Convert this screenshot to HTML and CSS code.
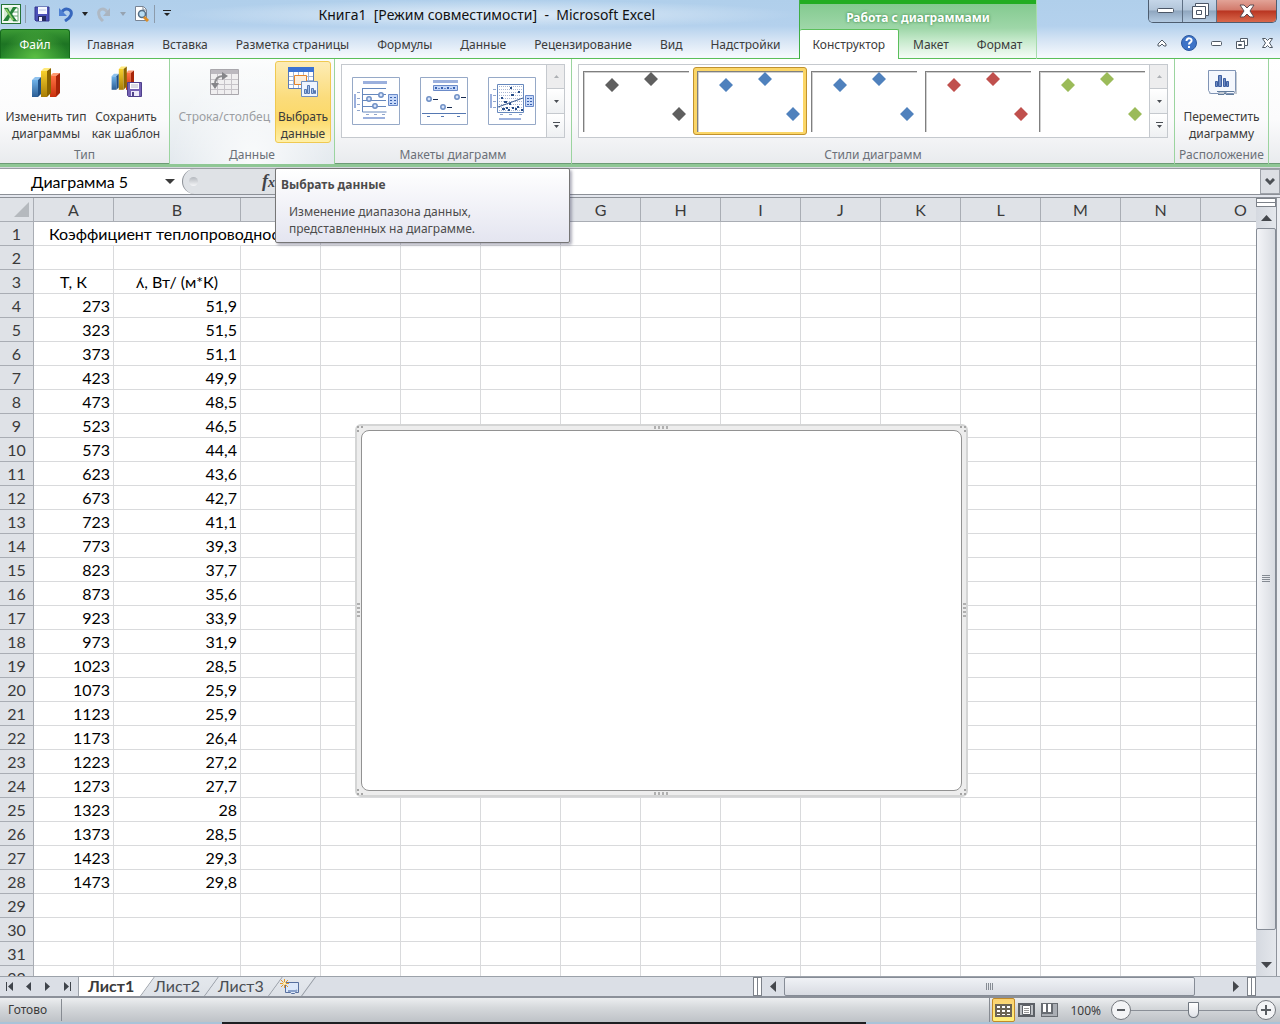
FILE: index.html
```
<!DOCTYPE html>
<html lang="ru">
<head>
    <meta charset="UTF-8">
    <meta name="viewport" content="width=device-width, initial-scale=1.0">
    <title>Книга1 - Microsoft Excel</title>
    <link rel="stylesheet" href="styles.css">
</head>
<body>
<div class="app">

    <header class="header">
        <div class="header-left">
            <div class="titlebar">
                <div class="quick-access">
                    <svg class="app-logo" width="20" height="20" viewBox="0 0 20 20"><rect x=".5" y=".5" width="19" height="19" fill="#f4faf4" stroke="#257339"/><path d="M3 3h11v14H3z" fill="#d7ecd5"/><path d="M12 4h5v13h-5M12 8h5M12 12h5" fill="#fff" stroke="#6da877"/><path d="M3 4h4l2 4 3-5h4l-5 7 5 7h-4l-3-4-2 4H2l5-7z" fill="#268239"/><path d="M4 5h2l7 11h-2z" fill="#91ce69"/></svg>
                    <span class="separator"></span>
                    <button class="icon-btn save" aria-label="Сохранить"><svg width="16" height="16" viewBox="0 0 16 16"><path d="M1 1h14v14H2l-1-1z" fill="#4b50b8" stroke="#32368d"/><path d="M4 1h9v7H4z" fill="#f6f8ff"/><path d="M5 4h7" stroke="#b9c4e2"/><path d="M4 10h8v5H4z" fill="#252b60"/><path d="M5 11h3v4H5z" fill="#eef"/></svg></button>
                    <button class="icon-btn" aria-label="Отменить"><svg width="16" height="16" viewBox="0 0 16 16"><path d="M4 6c3-5 11-3 9 3-1 3-3 4-6 6" fill="none" stroke="#3767bd" stroke-width="3"/><path d="M1 2v8h8z" fill="#4e80d2"/></svg></button>
                    <svg class="caret" width="6" height="4" viewBox="0 0 6 4"><path d="M0 0h6L3 4z"/></svg>
                    <button class="icon-btn" aria-label="Вернуть"><svg width="16" height="16" viewBox="0 0 16 16"><path d="M11 6C8 1 1 3 3 9c0 3 2 4 4 6" fill="none" stroke="#afb9c4" stroke-width="3"/><path d="M14 2v8H7z" fill="#aab4bf"/></svg></button>
                    <svg class="caret muted" width="6" height="4" viewBox="0 0 6 4"><path d="M0 0h6L3 4z"/></svg>
                    <button class="icon-btn preview" aria-label="Просмотр"><svg width="16" height="16" viewBox="0 0 16 16"><path d="M1.500.5h8l3 3v11h-11z" fill="#fff" stroke="#788494"/><path d="M9 1v3h3" fill="none" stroke="#788494"/><circle cx="8" cy="8" r="3.500" fill="#b7dcf2" stroke="#536d85" stroke-width="1.500"/><path d="M10 11l4 4" stroke="#dc8d28" stroke-width="3"/></svg></button>
                    <span class="separator"></span>
                    <svg class="caret" width="8" height="8" viewBox="0 0 8 8"><path d="M0 0h8v1H0zM1 3h6L4 6z"/></svg>
                </div>
                <div class="window-title">Книга1&nbsp; [Режим совместимости]&nbsp; -&nbsp; Microsoft Excel</div>
            </div>
            <nav class="tabs main-tabs">
                <button class="file-tab">Файл</button>
                <button class="tab">Главная</button>
                <button class="tab">Вставка</button>
                <button class="tab">Разметка страницы</button>
                <button class="tab">Формулы</button>
                <button class="tab">Данные</button>
                <button class="tab">Рецензирование</button>
                <button class="tab">Вид</button>
                <button class="tab">Надстройки</button>
            </nav>
        </div>
        <div class="context-tabs">
            <div class="context-title">Работа с диаграммами</div>
            <nav class="tabs">
                <button class="tab active">Конструктор</button>
                <button class="tab">Макет</button>
                <button class="tab">Формат</button>
            </nav>
        </div>
        <div class="header-right">
            <div class="window-buttons">
                <button aria-label="Свернуть"><svg width="18" height="6" viewBox="0 0 18 6"><rect x=".5" y=".5" width="16" height="4" rx="1" fill="#fff" stroke="#4b5666"/></svg></button>
                <button aria-label="Развернуть"><svg width="18" height="17" viewBox="0 0 18 17"><path d="M4.500.5h13v12h-3v3h-13v-12h3z" fill="#fff" stroke="#4b5666"/><path d="M4.500 3.500h10v9M5.500 7.500h5v4h-5z" fill="none" stroke="#4b5666"/></svg></button>
                <button class="close" aria-label="Закрыть"><svg width="16" height="14" viewBox="0 0 16 14"><path d="M1 1h4l3 3 3-3h4l-4 6 4 6h-4l-3-3-3 3H1l4-6z" fill="#fff" stroke="#5a4a50"/></svg></button>
            </div>
            <div class="book-buttons">
                <button class="icon-btn" aria-label="Свернуть ленту"><svg width="10" height="8" viewBox="0 0 10 8"><path d="M1 5l4-4 4 4v2H7L5 5 3 7H1z" fill="#fff" stroke="#505a66"/></svg></button>
                <button class="icon-btn" aria-label="Справка"><svg width="16" height="16" viewBox="0 0 16 16"><circle cx="8" cy="8" r="7.500" fill="#3d73c7" stroke="#2c589f"/><path d="M5.500 6c0-4 6-3 5 0-.5 1.500-2.500 1.500-2.500 3.500" fill="none" stroke="#fff" stroke-width="2"/><path d="M7 11h2v2H7z" fill="#fff"/></svg></button>
                <button class="icon-btn" aria-label="Свернуть книгу"><svg width="11" height="5" viewBox="0 0 11 5"><rect x=".5" y=".5" width="10" height="4" rx="1" fill="#fff" stroke="#505a66"/></svg></button>
                <button class="icon-btn" aria-label="Восстановить книгу"><svg width="12" height="11" viewBox="0 0 12 11"><path d="M4.500.5h7v7h-3v3h-8v-7h4z" fill="#fff" stroke="#505a66"/><path d="M4.500 3.500h4v4M2.500 6.500h3v1h-3zM7 3h2" fill="none" stroke="#505a66"/></svg></button>
                <button class="icon-btn" aria-label="Закрыть книгу"><svg width="11" height="10" viewBox="0 0 11 10"><path d="M.5.5h3l2 2 2-2h3L7.500 5l3 4.500h-3l-2-2-2 2h-3l3-4.500z" fill="#fff" stroke="#505a66"/></svg></button>
            </div>
        </div>
    </header>

    <section class="ribbon">
        <div class="group group-type">
            <div class="group-body">
                <button class="big-btn"><svg width="32" height="32" viewBox="0 0 32 32"><use href="#bars"/></svg><span>Изменить&nbsp;тип диаграммы</span></button>
                <button class="big-btn"><svg width="32" height="32" viewBox="0 0 32 32"><use href="#bars" transform="translate(0 -1) scale(.8)"/><path d="M17.500 16.500h14v14h-13l-1-1z" fill="#7562b4" stroke="#4f408c"/><path d="M20 17h9v6h-9z" fill="#fff"/><path d="M21 19h7M21 21h7" stroke="#b4b6c9"/><path d="M21 25h8v5h-8z" fill="#ede9fa"/><path d="M22 26h2v4h-2z" fill="#51448b"/></svg><span>Сохранить как&nbsp;шаблон</span></button>
            </div>
            <div class="group-name">Тип</div>
        </div>
        <div class="group group-data">
            <div class="group-body">
                <button class="big-btn" disabled><svg width="32" height="32" viewBox="0 0 32 32"><path d="M2.500 3.500h28v25h-28z" fill="#f0eff0" stroke="#a9a7ac"/><path d="M3 4h27v4H3z" fill="#bcb9bf"/><path d="M3 13.500h27M3 18.500h27M3 23.500h27M9.500 8v20M16.500 8v20M23.500 8v20" stroke="#c6c3c8"/><path d="M7 19c0-6 3-9 8-9" fill="none" stroke="#8d8d90" stroke-width="2"/><path d="M3 17h8l-4 6zM14 6l6 4-6 4z" fill="#858589"/></svg><span>Строка/столбец</span></button>
                <button class="big-btn selected"><svg width="32" height="32" viewBox="0 0 32 32"><path d="M1.500 1.500h25v21h-25z" fill="#fff" stroke="#5a7ab7"/><path d="M1 1h26v5H1z" fill="#3b72d2"/><path d="M2 10.500h24M2 14.500h24M2 18.500h24M6.500 6v16M11.500 6v16M16.500 6v16M21.500 6v16" stroke="#9fb5d7"/><path d="M7.500 9.500h12v9h-12z" fill="#fdeed9" stroke="#e78428" stroke-width="1"/><path d="M14.500 15.500h16v15h-16z" fill="#eff5ff" stroke="#7090c0"/><path d="M17.500 23.500h2v4h-2zM20.500 19.500h2v8h-2zM24.500 22.500h2v5h-2zM27.500 24.500h1v3h-1z" fill="#a3c0e9" stroke="#5578b2"/></svg><span>Выбрать данные</span></button>
            </div>
            <div class="group-name">Данные</div>
        </div>
        <div class="group group-layouts">
            <div class="group-body">
                <div class="gallery">
                    <div class="gallery-items layouts">
                        <button aria-label="Макет 1"><svg width="48" height="48" viewBox="0 0 48 48"><path d="M.5.5h47v47H.5z" fill="#fff" stroke="#96a9c7"/><path d="M11 4h24v3H11zM2 17h2v14H2zM11 40h22v2H11z" fill="#9bb0dd"/><path d="M10.500 11v24h24M11 11.500h23M11 17.500h23M11 23.500h23M11 29.500h23" fill="none" stroke="#6688bd"/><path d="M5 15.500h3M5 21.500h3M5 27.500h3M5 33.500h3M14 37.500h3M22 37.500h3M30 37.500h3" stroke="#91a6cc"/><g fill="#d8e4fa" stroke="#6e8fc5" stroke-width="1.500"><circle cx="17" cy="22" r="2.200"/><circle cx="29" cy="18" r="2.200"/><circle cx="23" cy="29" r="2.200"/></g><path d="M36.500 17.500h9v11h-9z" fill="#c5d7f8" stroke="#6b8bc9"/><path d="M38 20.500h2M38 23.500h2M38 26.500h2M42 20.500h2M42 23.500h2M42 26.500h2" stroke="#365fae"/></svg></button>
                        <button aria-label="Макет 2"><svg width="48" height="48" viewBox="0 0 48 48"><path d="M.5.5h47v47H.5z" fill="#fff" stroke="#96a9c7"/><path d="M13 3h25v3H13z" fill="#9bb0dd"/><path d="M13.500 8.500h24v5h-24z" fill="#c5d7f8" stroke="#6b8bc9"/><path d="M15 11h2M21 11h2M27 11h2M33 11h2" stroke="#365fae" stroke-width="2"/><path d="M18 11.500h2M24 11.500h2M30 11.500h2" stroke="#6b8bc9"/><g fill="#d8e4fa" stroke="#6e8fc5" stroke-width="1.500"><circle cx="9" cy="22" r="2.200"/><circle cx="37" cy="20" r="2.200"/><circle cx="23" cy="30" r="2.200"/></g><path d="M13 22.500h5M41 20.500h5M27 30.500h5" stroke="#172b50"/><path d="M2 36.500h44M7 39.500h3M21 39.500h3M37 39.500h3" stroke="#5578b2"/></svg></button>
                        <button aria-label="Макет 3"><svg width="48" height="48" viewBox="0 0 48 48"><path d="M.5.5h47v47H.5z" fill="#fff" stroke="#96a9c7"/><path d="M2 17h2v14H2zM11 41h22v2H11z" fill="#9bb0dd"/><path d="M9.500 7.500h26v28h-26z" fill="#fff" stroke="#6688bd"/><path d="M11 9.500h24M11 12.500h24M11 15.500h24M11 18.500h24M11 21.500h24M11 24.500h24M11 27.500h24M11 30.500h24M11 33.500h24" stroke="#aab8d4" stroke-dasharray="1 1"/><path d="M10 30l25-9" stroke="#38598e"/><path d="M22 11h2M30 15h2M23 18h3M13 21h2M16 25h3M21 27h2M14 32h3M18 31h2M20 33h2M24 31h2M27 32h2M29 30h2M33 33h2" stroke="#284d87" stroke-width="2"/><path d="M5 12.500h3M5 18.500h3M5 24.500h3M5 30.500h3M12 37.500h3M21 37.500h3M31 37.500h3" stroke="#91a6cc"/><path d="M37.500 18.500h8v11h-8z" fill="#c5d7f8" stroke="#6b8bc9"/><path d="M39 21.500h2M39 24.500h2M39 27.500h2M42 21.500h2M42 24.500h2M42 27.500h2" stroke="#365fae"/></svg></button>
                    </div>
                    <div class="gallery-scroll">
                        <button aria-label="Вверх" disabled><svg width="8" height="8" viewBox="0 0 8 8"><path d="M2 5h5L4.500 2z"/></svg></button>
                        <button aria-label="Вниз"><svg width="8" height="8" viewBox="0 0 8 8"><path d="M2 3h5L4.500 6z"/></svg></button>
                        <button aria-label="Ещё"><svg width="8" height="8" viewBox="0 0 8 8"><path d="M1 1h7v1H1zM2 4h5L4.500 7z"/></svg></button>
                    </div>
                </div>
            </div>
            <div class="group-name">Макеты диаграмм</div>
        </div>
        <div class="group group-styles">
            <div class="group-body">
                <div class="gallery">
                    <div class="gallery-items chart-styles">
                        <button class="style-gray" aria-label="Стиль 1"><svg width="106" height="61" viewBox="0 0 106 61"><use href="#points"/></svg></button>
                        <button class="style-blue current" aria-label="Стиль 2"><svg width="106" height="61" viewBox="0 0 106 61"><use href="#points"/></svg></button>
                        <button class="style-blue" aria-label="Стиль 3"><svg width="106" height="61" viewBox="0 0 106 61"><use href="#points"/></svg></button>
                        <button class="style-red" aria-label="Стиль 4"><svg width="106" height="61" viewBox="0 0 106 61"><use href="#points"/></svg></button>
                        <button class="style-green" aria-label="Стиль 5"><svg width="106" height="61" viewBox="0 0 106 61"><use href="#points"/></svg></button>
                    </div>
                    <div class="gallery-scroll">
                        <button aria-label="Вверх" disabled><svg width="8" height="8" viewBox="0 0 8 8"><path d="M2 5h5L4.500 2z"/></svg></button>
                        <button aria-label="Вниз"><svg width="8" height="8" viewBox="0 0 8 8"><path d="M2 3h5L4.500 6z"/></svg></button>
                        <button aria-label="Ещё"><svg width="8" height="8" viewBox="0 0 8 8"><path d="M1 1h7v1H1zM2 4h5L4.500 7z"/></svg></button>
                    </div>
                </div>
            </div>
            <div class="group-name">Стили диаграмм</div>
        </div>
        <div class="group group-place">
            <div class="group-body">
                <button class="big-btn"><svg width="32" height="32" viewBox="0 0 32 32"><path d="M3 27h27V6" fill="none" stroke="#c4cad2" stroke-width="2"/><path d="M2.500 4.500h27v20l-1 2-1 1h-7l-1-2h-6l-1 2h-8l-2-3z" fill="#f4f7fd" stroke="#8094b5"/><path d="M11 25.500h17M12 28.500h6l1-2 1 2h8" fill="none" stroke="#617b9b"/><path d="M9.500 15.500h2v5h-2zM12.500 9.500h3v11h-3zM17.500 12.500h2v8h-2zM20.500 15.500h2v5h-2z" fill="#718dc2" stroke="#3d5fa2"/></svg><span>Переместить диаграмму</span></button>
            </div>
            <div class="group-name">Расположение</div>
        </div>
    </section>

    <div class="formula-bar">
        <div class="name-box">
            <input type="text" value="Диаграмма 5" aria-label="Имя">
            <svg width="10" height="5" viewBox="0 0 10 5"><path d="M0 0h10L5 5z" fill="#3b3b3b"/></svg>
        </div>
        <div class="fx-area"><span class="fx-dot"></span><button class="fx" aria-label="Вставить функцию"><i>f</i><i class="fx-x">x</i></button></div>
        <input class="formula" type="text" aria-label="Строка формул">
        <button class="expand" aria-label="Развернуть строку формул"><svg width="10" height="7" viewBox="0 0 10 7"><path d="M1 1l4 4 4-4" fill="none" stroke="#4c5055" stroke-width="3"/></svg></button>

        <div class="tooltip" role="tooltip">
            <strong>Выбрать данные</strong>
            <p>Изменение диапазона данных, представленных на диаграмме.</p>
        </div>
    </div>

    <main class="workspace">
        <div class="sheet">
            <table class="cells">
                <colgroup id="cols"></colgroup>
                <thead><tr id="letters"><th class="corner"><svg width="15" height="15" viewBox="0 0 15 15"><path d="M15 0v15H0z" fill="#b5b9be"/></svg></th></tr></thead>
                <tbody id="rows"></tbody>
            </table>
            <div class="chart">
                <div class="chart-area"></div>
                <span class="grip top"></span>
                <span class="grip bottom"></span>
                <span class="grip side left"></span>
                <span class="grip side right"></span>
                <span class="corner-grip tl"></span>
                <span class="corner-grip tr"></span>
                <span class="corner-grip bl"></span>
                <span class="corner-grip br"></span>
            </div>
        </div>
        <div class="vscroll">
            <span class="split-h"></span>
            <button class="arrow" aria-label="Прокрутить вверх"><svg width="11" height="6" viewBox="0 0 11 6"><path d="M0 6h11L5.500 0z"/></svg></button>
            <span class="vthumb"><svg width="8" height="8" viewBox="0 0 8 8"><path d="M0 .5h8M0 2.500h8M0 4.500h8M0 6.500h8" stroke="#858b93"/></svg></span>
            <button class="arrow" aria-label="Прокрутить вниз"><svg width="11" height="6" viewBox="0 0 11 6"><path d="M0 0h11L5.500 6z"/></svg></button>
        </div>
    </main>

    <div class="sheet-bar">
        <div class="sheet-nav">
            <button aria-label="Первый лист"><svg width="8" height="9" viewBox="0 0 8 9"><path d="M0 0h1v9H0zM7 0v9L2 4.500z"/></svg></button>
            <button aria-label="Предыдущий лист"><svg width="8" height="9" viewBox="0 0 8 9"><path d="M6 0v9L1 4.500z"/></svg></button>
            <button aria-label="Следующий лист"><svg width="8" height="9" viewBox="0 0 8 9"><path d="M1 0v9l5-4.500z"/></svg></button>
            <button aria-label="Последний лист"><svg width="8" height="9" viewBox="0 0 8 9"><path d="M7 0h1v9H7zM1 0v9l5-4.500z"/></svg></button>
        </div>
        <div class="sheet-tabs">
            <button class="sheet-tab active">Лист1</button>
            <button class="sheet-tab">Лист2</button>
            <button class="sheet-tab">Лист3</button>
            <button class="sheet-tab new" aria-label="Вставить лист"><svg width="20" height="16" viewBox="0 0 20 16"><path d="M5.500 3.500h13v10h-3l-1 1h-3l-1-1h-5z" fill="#dce8fa" stroke="#566f9e"/><path d="M8 12h8l1-1" fill="none" stroke="#8aa2cb" stroke-width="2"/><path d="M4.500 0v9M0 4.500h9M1 1l7 7M8 1L1 8" stroke="#e59a2c"/><circle cx="4.500" cy="4.500" r="1.500" fill="#fff3b8"/></svg></button>
        </div>
        <div class="hscroll">
            <span class="split-v"></span>
            <button class="arrow" aria-label="Прокрутить влево"><svg width="6" height="11" viewBox="0 0 6 11"><path d="M6 0v11L0 5.500z"/></svg></button>
            <span class="hthumb"><svg width="8" height="7" viewBox="0 0 8 7"><path d="M.5 0v7M2.500 0v7M4.500 0v7M6.500 0v7" stroke="#858b93"/></svg></span>
            <button class="arrow" aria-label="Прокрутить вправо"><svg width="6" height="11" viewBox="0 0 6 11"><path d="M0 0v11l6-5.500z"/></svg></button>
            <span class="split-v"></span>
        </div>
    </div>

    <footer class="status">
        <span class="ready">Готово</span>
        <div class="views">
            <button class="current" aria-label="Обычный"><svg width="17" height="13" viewBox="0 0 17 13"><path d="M0 0h17v13H0z" fill="#6b6455"/><path d="M2 2h3v2H2zM7 2h3v2H7zM12 2h3v2h-3zM2 6h3v2H2zM7 6h3v2H7zM12 6h3v2h-3zM2 10h3v1H2zM7 10h3v1H7zM12 10h3v1h-3z" fill="#fff"/></svg></button>
            <button aria-label="Разметка страницы"><svg width="17" height="14" viewBox="0 0 17 14"><path d="M1 1h15v12H1z" fill="#bdc0c4" stroke="#5c6066" stroke-width="2"/><path d="M4.500 2.500h8v9h-8z" fill="#fff" stroke="#5c6066"/><path d="M6 5.500h5M6 7.500h5M6 9.500h5" stroke="#999"/></svg></button>
            <button aria-label="Страничный режим"><svg width="17" height="14" viewBox="0 0 17 14"><path d="M0 0h17v14H0z" fill="#686c72"/><path d="M2 1h3v8H2zM7 1h3v8H7z" fill="#fff"/><path d="M12 1h4v12h-4zM1 11h11v2H1z" fill="#aaaeb4"/></svg></button>
        </div>
        <span class="percent">100%</span>
        <div class="zoom">
            <button aria-label="Уменьшить"><svg width="20" height="20" viewBox="0 0 20 20"><circle cx="10" cy="10" r="9.500" fill="#f3f4f6" stroke="#73777d"/><path d="M6 10h8" stroke="#595d62" stroke-width="2"/></svg></button>
            <input type="range" min="0" max="200" value="100" aria-label="Масштаб">
            <button aria-label="Увеличить"><svg width="20" height="20" viewBox="0 0 20 20"><circle cx="10" cy="10" r="9.500" fill="#f3f4f6" stroke="#73777d"/><path d="M5 10h10M10 5v10" stroke="#595d62" stroke-width="2"/></svg></button>
        </div>
    </footer>
    <div class="taskbar-edge"></div>
</div>

<svg width="0" height="0" class="defs">
    <defs>
        <linearGradient id="gBlue" x2="0" y2="1"><stop offset="0" stop-color="#6fb3ea"/><stop offset="1" stop-color="#2b5d94"/></linearGradient>
        <linearGradient id="gYellow" x2="0" y2="1"><stop offset="0" stop-color="#f7d02c"/><stop offset="1" stop-color="#a87d06"/></linearGradient>
        <linearGradient id="gRed" x2="0" y2="1"><stop offset="0" stop-color="#ff7243"/><stop offset="1" stop-color="#c9300c"/></linearGradient>
        <g id="bars">
            <path d="M2 14h6v17H2z" fill="url(#gBlue)"/><path d="M2 14l3-3h6l-3 3z" fill="#8fc2ee"/><path d="M8 14l3-3v17l-3 3z" fill="#1e4f86"/>
            <path d="M20 10h6v21h-6z" fill="url(#gRed)"/><path d="M20 10l3-3h7l-4 3z" fill="#ff9a70"/><path d="M26 10l4-3v20l-4 4z" fill="#a82508"/>
            <path d="M11 5h6v26h-6z" fill="url(#gYellow)"/><path d="M11 5l3-3h7l-4 3z" fill="#ffe97a"/><path d="M17 5l4-3v25l-4 4z" fill="#8a6500"/>
        </g>
        <g id="points">
            <path d="M0 0h106v1H1v60H0z" fill="#7f7f7f"/><path d="M1 1h105v1H2v59H1z" fill="#d0d0d0"/>
            <path d="M29 7l7 7-7 7-7-7zM68 1l7 7-7 7-7-7zM96 36l7 7-7 7-7-7z" fill="currentColor"/>
        </g>
    </defs>
</svg>

<script>
    const letters = "ABCDEFGHIJKLMNO".split("");
    const temps = [];
    for (let t = 273; t <= 1473; t += 50) temps.push(t);
    const lambda = ["51,9", "51,5", "51,1", "49,9", "48,5", "46,5", "44,4", "43,6", "42,7", "41,1", "39,3", "37,7", "35,6",
        "33,9", "31,9", "28,5", "25,9", "25,9", "26,4", "27,2", "27,7", "28", "28,5", "29,3", "29,8"];

    const cols = document.getElementById('cols');
    cols.innerHTML = '<col class="col-num"><col class="col"><col class="col-wide">' + '<col class="col">'.repeat(letters.length - 2);
    letters.forEach(l => {
        document.getElementById('letters').insertAdjacentHTML('beforeend', `<th>${l}</th>`);
    });

    let html = '';
    for (let r = 1; r <= 32; r++) {
        html += `<tr><th>${r}</th>`;
        if (r === 1) {
            // заголовок объединён на A1:C1
            html += '<td class="title" colspan="3">Коэффициент теплопроводности</td>' + '<td></td>'.repeat(letters.length - 3);
        } else if (r === 3) {
            html += '<td class="center">T, К</td><td class="center">ʎ, Вт/ (м*К)</td>' + '<td></td>'.repeat(letters.length - 2);
        } else if (r >= 4 && r <= 28) {
            html += `<td>${temps[r - 4]}</td><td>${lambda[r - 4]}</td>` + '<td></td>'.repeat(letters.length - 2);
        } else {
            html += '<td></td>'.repeat(letters.length);
        }
        html += '</tr>';
    }
    document.getElementById('rows').innerHTML = html;
</script>
</body>
</html>
```

FILE: styles.css
```
* {
    box-sizing: border-box;
}
body {
    margin: 0;
    font-family: "Noto Sans", "Open Sans", sans-serif;
    font-size: 12px;
    color: #3b3b3b;
}
button, input {
    font: inherit;
    color: inherit;
    border: 0;
    margin: 0;
    padding: 0;
    background: none;
}
svg {
    display: block;
    flex: none;
}
.defs {
    position: absolute;
}
.app {
    display: flex;
    flex-direction: column;
    height: 100vh;
    overflow: hidden;
}

/* title and tabs */
.header {
    display: flex;
    height: 59px;
    background: linear-gradient(#b0cfeb, #b4d1ed 26px, #d5e4f4 40px, #f4f8fd 56px);
}
.header-left, .context-tabs {
    display: flex;
    flex-direction: column;
}
.titlebar {
    display: flex;
    height: 29px;
}
.quick-access {
    display: flex;
    align-items: center;
    gap: 8px;
    padding: 0 4px 2px 1px;
}
.separator {
    width: 1px;
    height: 18px;
    background: #8c9bab;
    margin-left: -4px;
}
.icon-btn {
    display: flex;
    align-items: center;
    justify-content: center;
}
.caret {
    fill: #222;
}
.caret.muted {
    fill: #96a3b1;
}
.window-title {
    flex: 1;
    text-align: center;
    font-size: 14px;
    line-height: 29px;
    color: #111;
    white-space: nowrap;
    background: radial-gradient(closest-side, rgba(255, 255, 255, 0.6), rgba(255, 255, 255, 0));
}
.tabs {
    display: flex;
    height: 30px;
    border-bottom: 1px solid #5bbf5b;
}
.main-tabs {
    padding-right: 4px;
}
.tab {
    padding: 2px 14px 0;
    white-space: nowrap;
}
.file-tab {
    width: 70px;
    margin-right: 3px;
    color: #fff;
    border: 1px solid #156a1c;
    border-bottom: 0;
    border-radius: 3px 3px 0 0;
    background: radial-gradient(ellipse at bottom, #5cbf44, rgba(60, 150, 50, 0) 70%), linear-gradient(#3b9a35, #1d7423 50%, #26862b);
}
.context-tabs {
    background: linear-gradient(#22ad22 4px, #84ca90 4px, #9ed6a8 28px, #c4e9ca 40px, #f3fbf5 57px);
    border-left: 1px solid #3fae44;
    border-right: 1px solid #a7dbab;
}
.context-title {
    height: 29px;
    padding-top: 5px;
    line-height: 26px;
    text-align: center;
    font-weight: bold;
    color: #fff;
    text-shadow: 0 0 3px #2f7d3a;
}
.tab.active {
    background: #fff;
    border: 1px solid #5bbf5b;
    border-bottom: 0;
    border-left: 0;
    border-radius: 2px 2px 0 0;
    margin-bottom: -1px;
    padding: 0 13px;
}
.header-right {
    flex: 1;
    display: flex;
    flex-direction: column;
    align-items: flex-end;
    border-bottom: 1px solid #5bbf5b;
}
.window-buttons {
    display: flex;
    height: 23px;
    margin-right: 3px;
    border: 1px solid #4d5d70;
    border-top: 0;
    border-radius: 0 0 5px 5px;
    overflow: hidden;
}
.window-buttons button {
    display: flex;
    align-items: center;
    justify-content: center;
    width: 34px;
    border-right: 1px solid #5d6f84;
    background: linear-gradient(#c5d6e8, #b2c5d9 45%, #8fa6bf 50%, #b4cbe2);
}
.window-buttons .close {
    width: 59px;
    border-right: 0;
    background: linear-gradient(#e2a397, #d27a6b 45%, #b93521 50%, #d9684b);
}
.book-buttons {
    display: flex;
    align-items: center;
    gap: 14px;
    padding: 5px 7px 0 0;
    height: 35px;
}

/* ribbon */
.ribbon {
    display: flex;
    height: 108px;
    padding-right: 11px;
    background: linear-gradient(#fff, #fbfbfc 60px, #e9ebee 104px);
    border-bottom: 3px solid #8fc795;
    box-shadow: inset 0 -1px #6d9b76;
}
.group {
    display: flex;
    flex-direction: column;
    border-right: 1px solid #9bd49f;
    flex: none;
}
.group-type {
    width: 170px;
}
.group-data {
    width: 165px;
    background: radial-gradient(ellipse at bottom, rgba(255, 255, 255, 0.8), rgba(255, 255, 255, 0) 70%), linear-gradient(#fcfdfd, #e3e9ee);
}
.group-layouts {
    width: 237px;
}
.group-styles {
    flex: 1;
}
.group-place {
    width: 94px;
}
.group-body {
    display: flex;
    justify-content: center;
    flex: 1;
    padding-top: 2px;
}
.group-name {
    height: 18px;
    line-height: 18px;
    text-align: center;
    color: #6b7078;
}
.big-btn {
    display: flex;
    flex-direction: column;
    align-items: center;
    justify-content: flex-start;
    gap: 10px;
    height: 82px;
    padding: 4px 0 0;
    border: 1px solid transparent;
    border-radius: 3px;
    line-height: 17px;
}
.group-type .group-body {
    justify-content: flex-start;
    padding-left: 4px;
}
.group-type .big-btn {
    width: 84px;
}
.group-type .big-btn + .big-btn {
    width: 76px;
}
.group-data .group-body {
    justify-content: flex-end;
    gap: 4px;
    padding-right: 3px;
}
.big-btn:disabled {
    color: #9b9ea2;
}
.big-btn.selected {
    width: 56px;
    border-color: #efc951;
    background: linear-gradient(#fdecb5, #fbdc7b 45%, #fcd968 70%, #fff0a8);
}
.gallery {
    display: flex;
    flex: 1;
    height: 74px;
    margin: 3px 6px 0;
    border: 1px solid #c5c9ce;
    background: #fff;
}
.gallery-items {
    display: flex;
    flex: 1;
    align-items: center;
}
.layouts {
    gap: 20px;
    padding-left: 10px;
}
.chart-styles {
    overflow: hidden;
}
.chart-styles button {
    width: 114px;
    height: 68px;
    padding: 0 4px;
    border-radius: 3px;
    flex: none;
}
.chart-styles .current {
    padding: 0;
    border: 1px solid #c0922f;
    background: #fbd667;
}
.chart-styles .current svg {
    margin: 0 auto;
    background: #fff;
}
.style-gray {
    color: #5f5f5f;
}
.style-blue {
    color: #4f81bd;
}
.style-red {
    color: #c0504d;
}
.style-green {
    color: #9bbb59;
}
.gallery-scroll {
    display: flex;
    flex-direction: column;
    width: 18px;
    border-left: 1px solid #c5c9ce;
}
.gallery-scroll button {
    display: flex;
    flex: 1;
    align-items: center;
    justify-content: center;
    border-bottom: 1px solid #c5c9ce;
    background: linear-gradient(#fff, #eef0f2);
    fill: #4a4e54;
}
.gallery-scroll button:last-child {
    border-bottom: 0;
}
.gallery-scroll button:disabled {
    background: #ededee;
    fill: #adb0b4;
}

/* formula bar */
.formula-bar {
    position: relative;
    display: flex;
    height: 31px;
    padding-top: 2px;
    background: linear-gradient(#d5d8dd 1px, #9a9da3 1px, #9a9da3 2px, #fff 2px, #fff 27px, #8c9097 27px, #8c9097 28px, #e4e7ee 28px);
    border-bottom: 1px solid #8c9097;
    font-family: Lato, "Noto Sans", sans-serif;
    font-size: 16px;
    color: #000;
}
.formula-bar > * {
    height: 25px;
}
.name-box {
    display: flex;
    align-items: center;
    width: 182px;
    padding-right: 7px;
}
.name-box input {
    flex: 1;
    min-width: 0;
    padding-right: 6px;
    text-align: center;
}
.fx-area {
    display: flex;
    align-items: center;
    justify-content: space-between;
    width: 100px;
    padding: 0 7px 0 6px;
    background: #dfe2e6;
    border-left: 1px solid #8c9097;
    border-radius: 13px 0 0 13px;
}
.fx-dot {
    width: 9px;
    height: 9px;
    border-radius: 50%;
    background: linear-gradient(#b4b8be, #f5f6f8);
}
.fx {
    font-family: "Liberation Serif", serif;
    font-size: 18px;
    font-weight: bold;
    color: #3f4349;
}
.fx-x {
    font-size: 14px;
}
.formula {
    flex: 1;
    min-width: 0;
}
.expand {
    display: flex;
    align-items: center;
    justify-content: center;
    width: 20px;
    background: #dcdfe4;
    border: 1px solid #9da1a8;
}
.tooltip {
    position: absolute;
    left: 275px;
    top: 1px;
    z-index: 2;
    width: 295px;
    height: 75px;
    padding: 7px 5px;
    border: 1px solid #767676;
    border-radius: 2px;
    background: linear-gradient(#fff, #e4e5f0);
    box-shadow: 2px 2px 3px rgba(60, 60, 90, 0.4);
    font: 12px/17px "Noto Sans", "Open Sans", sans-serif;
    color: #4c4c4c;
}
.tooltip p {
    margin: 10px 60px 0 8px;
}

/* worksheet */
.workspace {
    display: flex;
    flex: 1;
    min-height: 0;
}
.sheet {
    position: relative;
    flex: 1;
    min-width: 0;
    overflow: hidden;
    background: #fff;
}
.cells {
    table-layout: fixed;
    width: 1281px;
    border-collapse: separate;
    border-spacing: 0;
    font: 16px/22px Lato, "Noto Sans", sans-serif;
    color: #000;
}
.col-num {
    width: 34px;
}
.col {
    width: 80px;
}
.col-wide {
    width: 127px;
}
.cells th {
    height: 24px;
    padding: 0;
    font-weight: normal;
    color: #3b3b3b;
    background: #dfe2e7;
    border-right: 1px solid #a9adb4;
    border-bottom: 1px solid #a9adb4;
}
.cells .corner svg {
    margin-left: 14px;
}
.cells td {
    height: 24px;
    padding: 0 3px;
    text-align: right;
    border-right: 1px solid #d9dadc;
    border-bottom: 1px solid #d9dadc;
    white-space: nowrap;
}
.cells td.center {
    text-align: center;
}
.cells td.title {
    padding-left: 15px;
    text-align: left;
}
.chart {
    position: absolute;
    left: 355px;
    top: 226px;
    width: 613px;
    height: 373px;
    padding: 4px;
    border: 2px solid #d4d5d5;
    border-radius: 6px;
    background: #ededed;
}
.chart-area {
    height: 100%;
    border: 1px solid #929292;
    border-radius: 8px;
    background: #fff;
}
.grip {
    position: absolute;
    left: 50%;
    width: 15px;
    height: 3px;
    margin-left: -8px;
    background: repeating-linear-gradient(90deg, #b0b0b0 0 2px, transparent 2px 4px);
}
.grip.top {
    top: 0;
}
.grip.bottom {
    bottom: 0;
}
.grip.side {
    top: 50%;
    left: 0;
    width: 3px;
    height: 15px;
    margin: -8px 0 0;
    background: repeating-linear-gradient(#b0b0b0 0 2px, transparent 2px 4px);
}
.grip.right {
    left: auto;
    right: 0;
}
.corner-grip {
    position: absolute;
    width: 6px;
    height: 6px;
    border: 2px dotted #a5a5a5;
}
.tl {
    top: 0;
    left: 0;
    border-right: 0;
    border-bottom: 0;
}
.tr {
    top: 0;
    right: 0;
    border-left: 0;
    border-bottom: 0;
}
.bl {
    bottom: 0;
    left: 0;
    border-right: 0;
    border-top: 0;
}
.br {
    bottom: 0;
    right: 0;
    border-left: 0;
    border-top: 0;
}
.arrow {
    display: flex;
    align-items: center;
    justify-content: center;
    flex: none;
    fill: #44474c;
}
.vscroll {
    display: flex;
    flex-direction: column;
    width: 24px;
    padding-right: 4px;
    background: linear-gradient(90deg, #d5d9e0, #e4e7ec 20px, #8e939b 20px, #8e939b 21px, #eceef2 21px);
}
.vscroll .arrow {
    height: 21px;
}
.vscroll > :last-child {
    height: 22px;
    margin-top: 24px;
}
.split-h {
    height: 9px;
    border: 1px solid #7d828a;
    background: linear-gradient(#fff 3px, #7d828a 3px, #7d828a 4px, #fff 4px);
}
.vthumb, .hthumb {
    display: flex;
    flex: 1;
    align-items: center;
    justify-content: center;
    border: 1px solid #868c96;
    border-radius: 2px;
}
.vthumb {
    background: linear-gradient(90deg, #f4f5f8, #d8dbe1);
}
.hthumb {
    background: linear-gradient(#f0f2f6, #d8dbe2);
}

/* sheet tabs */
.sheet-bar {
    display: flex;
    height: 22px;
    background: #dbdfe6;
    border-top: 1px solid #9ca2aa;
    border-bottom: 2px solid #8b9099;
}
.sheet-nav {
    display: flex;
    align-items: center;
    gap: 11px;
    width: 79px;
    padding-left: 6px;
    border-right: 1px solid #9ca2aa;
    fill: #3f444b;
}
.sheet-tabs {
    display: flex;
    flex: 1;
    overflow: hidden;
}
.sheet-tab {
    position: relative;
    z-index: 0;
    padding: 0 12px 1px 6px;
    font: 16px/18px Lato, "Noto Sans", sans-serif;
    color: #4a4e54;
}
/* slanted sides of the tab */
.sheet-tab::before {
    content: "";
    position: absolute;
    z-index: -1;
    top: 0;
    bottom: 0;
    left: 0;
    right: 0;
    border-right: 1px solid #8f959e;
    background: linear-gradient(#e4e8ed, #dde1e7);
    transform: skewX(-36deg);
}
.sheet-tab.active {
    padding: 0 14px 1px 9px;
    font-weight: bold;
    color: #3b3b3b;
}
.sheet-tab.active::before {
    left: -20px;
    background: #fff;
}
.sheet-tab.new {
    padding: 0 9px 0 4px;
}
.hscroll {
    display: flex;
    width: 527px;
    padding-right: 24px;
}
.hscroll .arrow {
    width: 22px;
}
.hthumb + .arrow {
    margin-left: 30px;
}
.split-v {
    width: 9px;
    border: 1px solid #7d828a;
    background: linear-gradient(90deg, #fff 3px, #7d828a 3px, #7d828a 4px, #fff 4px);
}

/* status bar */
.status {
    display: flex;
    align-items: center;
    height: 24px;
    background: linear-gradient(#eceef0, #d5d8db 10px, #bec2c7);
}
.ready {
    padding: 0 14px 0 8px;
    line-height: 22px;
    border-right: 1px solid #868b92;
    margin-right: auto;
}
.views {
    display: flex;
    border-left: 1px solid #868b92;
    padding-left: 2px;
}
.views button {
    display: flex;
    align-items: center;
    justify-content: center;
    width: 23px;
    height: 24px;
}
.views .current {
    border: 1px solid #c28a28;
    border-radius: 2px;
    background: linear-gradient(#fbd271, #fff07a);
}
.percent {
    padding: 0 10px 0 9px;
}
.zoom {
    display: flex;
    align-items: center;
    padding-right: 4px;
}
.zoom input {
    appearance: none;
    width: 125px;
    height: 20px;
    background: linear-gradient(transparent 10px, #8a8f97 10px, #8a8f97 11px, transparent 11px);
}
.zoom input::-webkit-slider-thumb {
    appearance: none;
    width: 11px;
    height: 16px;
    background: linear-gradient(#fff, #e0e3e8);
    border: 1px solid #6f767f;
    border-radius: 1px 1px 6px 6px;
}
.taskbar-edge {
    height: 2px;
    background: linear-gradient(90deg, #a9c3d8 222px, #1d1f22 222px, #1d1f22 866px, #a9c3d8 866px);
}
```
